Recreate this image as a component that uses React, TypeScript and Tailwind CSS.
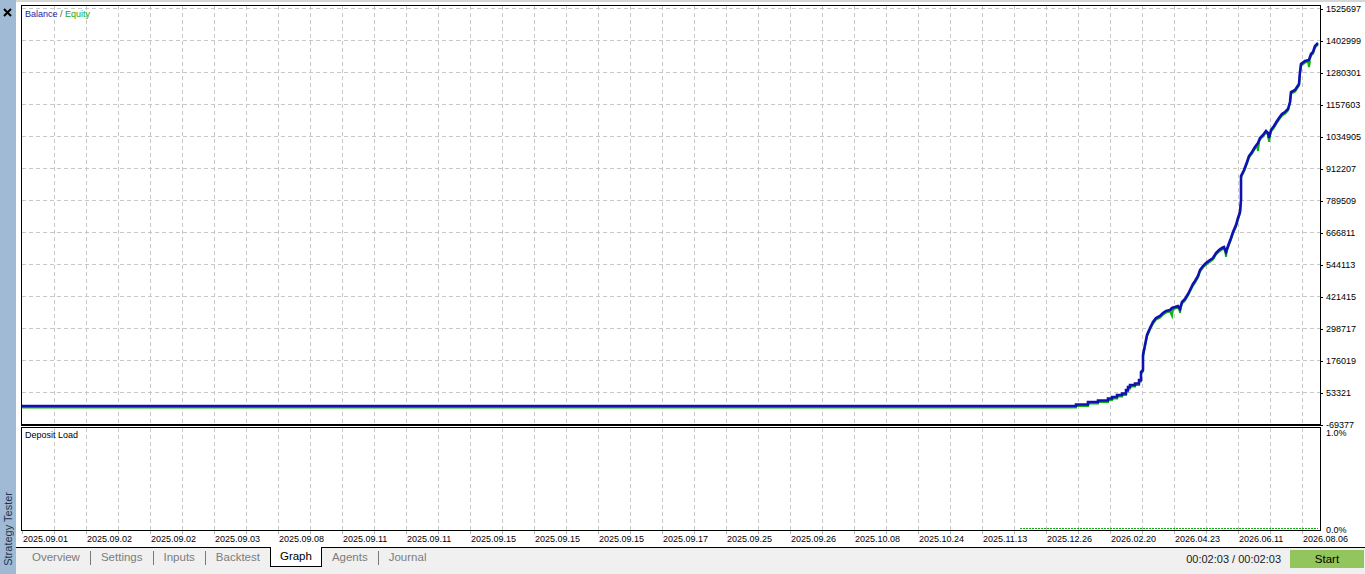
import React from "react";

const dates = [
  "2025.09.01", "2025.09.02", "2025.09.02", "2025.09.03", "2025.09.08", "2025.09.11",
  "2025.09.11", "2025.09.15", "2025.09.15", "2025.09.15", "2025.09.17", "2025.09.25",
  "2025.09.26", "2025.10.08", "2025.10.24", "2025.11.13", "2025.12.26", "2026.02.20",
  "2026.04.23", "2026.06.11", "2026.08.06",
];

const yLabels = [
  "1525697", "1402999", "1280301", "1157603", "1034905", "912207", "789509",
  "666811", "544113", "421415", "298717", "176019", "53321", "-69377",
];

// balance curve, page coordinates
const balance: [number, number][] = [
  [22, 406], [1076, 406], [1076, 404.5], [1088, 404.5], [1088, 402], [1098, 402], [1098, 400.5],
  [1108, 400.5], [1108, 398.5], [1112, 398.5], [1112, 397], [1117, 397], [1117, 395], [1122, 395],
  [1122, 393.5], [1126, 393.5], [1126, 390], [1128, 390], [1128, 387], [1130, 387], [1130, 385],
  [1135, 385], [1135, 383.5], [1139, 383.5], [1139, 380], [1141, 380], [1141, 372], [1143, 370],
  [1143, 355], [1145, 345], [1147, 335], [1150, 328], [1153, 322], [1156, 318], [1160, 316],
  [1163, 313], [1166, 311], [1170, 310], [1172, 308], [1175, 307], [1178, 306], [1180, 309],
  [1182, 302], [1185, 299], [1188, 294], [1190, 290], [1193, 284], [1195, 281], [1198, 276],
  [1200, 270], [1203, 266], [1206, 263], [1210, 260], [1213, 258], [1216, 253], [1219, 250],
  [1222, 248], [1224, 247], [1226, 252], [1228, 246], [1231, 238], [1233, 232], [1236, 225],
  [1238, 218], [1240, 212], [1241, 200], [1241, 176], [1244, 170], [1247, 162], [1249, 156],
  [1252, 152], [1255, 147], [1258, 143], [1260, 138], [1263, 135], [1266, 131], [1268, 133],
  [1269, 138], [1271, 130], [1274, 126], [1277, 121], [1279, 118], [1282, 114], [1285, 112],
  [1288, 109], [1290, 102], [1291, 92], [1295, 90], [1297, 87], [1299, 84], [1300, 72],
  [1301, 64], [1305, 61], [1309, 60], [1311, 54], [1313, 52], [1315, 46], [1318, 43],
];

const equityDips: [number, number][][] = [
  [[1170, 311], [1172, 316], [1173, 309]],
  [[1179, 307], [1180, 313], [1181, 305]],
  [[1225, 249], [1226, 257], [1227, 249]],
  [[1257, 145], [1258, 151], [1259, 143]],
  [[1268, 134], [1269, 142], [1270, 134]],
  [[1308, 61], [1309, 67], [1310, 61]],
];

const toPts = (arr: [number, number][], dy = 0) =>
  arr.map(([x, y]) => `${x},${y + dy}`).join(" ");

const vGrid = Array.from({ length: 40 }, (_, i) => 54.5 + i * 32);
const hGrid = Array.from({ length: 13 }, (_, i) => 8.5 + i * 32);

const tabs = ["Overview", "Settings", "Inputs", "Backtest", "Graph", "Agents", "Journal"];

export default function App() {
  return (
    <div className="w-[1365px] h-[574px] flex bg-[#f0f0f0] overflow-hidden font-['Liberation_Sans',Arial,sans-serif]">
      <aside className="w-[16px] shrink-0 bg-[#a0b9d4] flex flex-col items-center justify-between">
        <svg width="16" height="20" viewBox="0 0 16 20" className="mt-[3px]">
          <path d="M4 6 L11 13 M11 6 L4 13" stroke="#000" strokeWidth="2" />
        </svg>
        <div className="[writing-mode:vertical-rl] rotate-180 text-[11px] leading-[16px] text-[#1f3550] pt-[8px]">
          Strategy Tester
        </div>
      </aside>

      <div className="flex-1 flex flex-col min-w-0">
        <div className="h-[2px] bg-[#d6d6d6]" />

        <div className="bg-white flex flex-col">
          <div className="flex pt-[3px] pl-[5px]">
            <div className="w-[1300px] shrink-0 flex flex-col gap-px">
              <div className="relative h-[421px] border-t border-x border-b-2 border-black">
                <svg className="absolute inset-0" width="1298" height="418" viewBox="22 6 1298 418">
                  {vGrid.map((x) => (
                    <line key={x} x1={x} y1={6} x2={x} y2={424} stroke="#c8c8c8" strokeDasharray="4 3" />
                  ))}
                  {hGrid.map((y) => (
                    <line key={y} x1={22} y1={y} x2={1320} y2={y} stroke="#c8c8c8" strokeDasharray="4 3" />
                  ))}
                  <polyline points={toPts(balance, 1.6)} fill="none" stroke="#14b014" strokeWidth="2" />
                  {equityDips.map((d, i) => (
                    <polyline key={i} points={toPts(d)} fill="none" stroke="#14b014" strokeWidth="2" />
                  ))}
                  <polyline points={toPts(balance)} fill="none" stroke="#1010b4" strokeWidth="2.6" />
                </svg>
                <div className="relative pl-[3px] pt-[3px] text-[9px] leading-[11px]">
                  <span className="text-[#1c1c9c]">Balance</span>
                  <span className="text-[#6b5a3a]"> / </span>
                  <span className="text-[#14a814]">Equity</span>
                </div>
              </div>

              <div className="relative h-[104px] border border-black">
                <svg className="absolute inset-0" width="1298" height="102" viewBox="22 428 1298 102">
                  {vGrid.map((x) => (
                    <line key={x} x1={x} y1={428} x2={x} y2={530} stroke="#c8c8c8" strokeDasharray="4 3" />
                  ))}
                  <line x1={1020} y1={528.5} x2={1318} y2={528.5} stroke="#14a814" strokeDasharray="2 1" />
                </svg>
                <div className="relative pl-[3px] pt-[2px] text-[9px] leading-[11px] text-black">
                  Deposit Load
                </div>
              </div>
            </div>

            <div className="flex-1 flex flex-col text-[9px] leading-[12px] text-black">
              <div className="h-[422px]">
                <div className="-mt-[2px] flex flex-col gap-[20px]">
                  {yLabels.map((l) => (
                    <div key={l} className="h-[12px] flex items-center">
                      <span className="w-[2px] h-px bg-black" />
                      <span className="ml-[3px]">{l}</span>
                    </div>
                  ))}
                </div>
              </div>
              <div className="h-[104px] flex flex-col justify-between pl-[5px]">
                <div className="h-[12px]">1.0%</div>
                <div className="h-[12px] -mb-[5px]">0.0%</div>
              </div>
            </div>
          </div>

          <div className="relative h-[16px] flex pl-[7px]">
            <svg className="absolute left-0 top-0" width="1349" height="3" viewBox="16 531 1349 3">
              {Array.from({ length: 41 }, (_, i) => 22.5 + i * 32).map((x) => (
                <line key={x} x1={x} y1={531} x2={x} y2={534} stroke="#b4b4b4" />
              ))}
            </svg>
            {dates.map((d, i) => (
              <div key={i} className="w-[64px] shrink-0 text-[9px] leading-[16px] text-black">
                {d}
              </div>
            ))}
          </div>
        </div>

        <div className="h-[27px] border-t border-black flex items-start pl-[6px]">
          {tabs.map((t, i) => {
            const active = t === "Graph";
            const next = tabs[i + 1];
            const sep = next && !active && next !== "Graph";
            return (
              <React.Fragment key={t}>
                {active ? (
                  <div className="-mt-px h-[20px] px-[9px] border-x border-b border-black bg-white text-[11.5px] leading-[19px] text-black">
                    {t}
                  </div>
                ) : (
                  <div className="h-[19px] px-[10px] text-[11.5px] leading-[19px] text-[#7c7c7c]">{t}</div>
                )}
                {sep && <div className="w-px h-[14px] mt-[3px] bg-[#7a7a7a]" />}
              </React.Fragment>
            );
          })}

          <div className="ml-auto flex items-center gap-[9px] pt-[2px] pr-px">
            <span className="text-[11px] text-[#1a1a1a]">00:02:03 / 00:02:03</span>
            <button className="w-[74px] h-[18px] bg-[#92c65c] text-[11.5px] leading-[18px] text-black">
              Start
            </button>
          </div>
        </div>
      </div>
    </div>
  );
}
